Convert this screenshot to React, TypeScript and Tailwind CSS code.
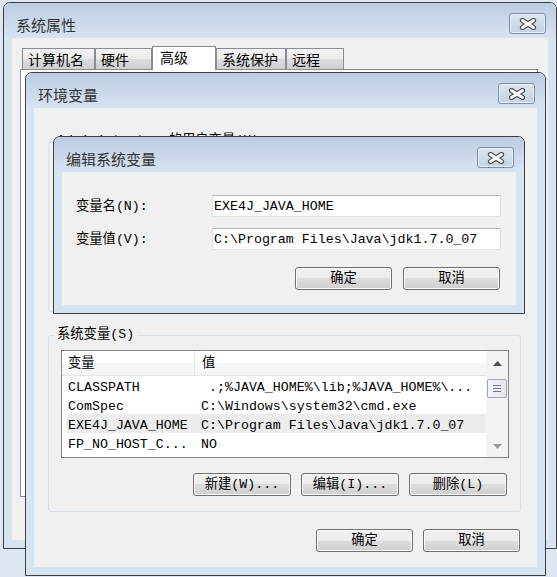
import React from "react";

const F = "font-['Liberation_Mono','Noto_Sans_CJK_SC',monospace] text-[13.3px] text-black";

function CloseBtn() {
  return (
    <div className="w-[37px] h-[21px] rounded-[3px] border border-[#7d8ea6] bg-gradient-to-b from-[#dde6f0] to-[#c3d1e2] shadow-[inset_0_0_0_1px_#e6edf5] flex items-center justify-center">
      <svg width="18" height="12" viewBox="0 0 18 12">
        <path d="M3.5 2.5 L14.5 9.5 M14.5 2.5 L3.5 9.5" stroke="#4a4f57" strokeWidth="5.2" strokeLinecap="round" />
        <path d="M3.5 2.5 L14.5 9.5 M14.5 2.5 L3.5 9.5" stroke="#ffffff" strokeWidth="3" strokeLinecap="round" />
      </svg>
    </div>
  );
}

function Win({ pos, title, children }: { pos: string; title: string; children?: React.ReactNode }) {
  return (
    <div className={`absolute flex flex-col border border-[#3f3f3f] rounded-t-[7px] bg-[#d6e3f1] overflow-hidden ${pos}`}>
      <div className="h-[35px] shrink-0 flex items-start justify-between bg-gradient-to-b from-[#bccde1] via-[#c9d8e9] to-[#d6e3f1]">
        <span className="ml-[12px] mt-[12px] text-[15px] leading-[20px] text-[#333333] font-['Noto_Sans_CJK_SC',sans-serif]">
          {title}
        </span>
        <div className="mt-[10px] mr-[10px]">
          <CloseBtn />
        </div>
      </div>
      <div className="flex-1 min-h-0 mx-[8px] mb-[8px] bg-[#f0f0f0] flex flex-col">{children}</div>
    </div>
  );
}

function Btn({ w, children }: { w: string; children: React.ReactNode }) {
  return (
    <div
      className={`${w} h-[23px] shrink-0 rounded-[3px] border border-[#707070] bg-[linear-gradient(#f2f2f2_0%,#ebebeb_50%,#dddddd_50%,#cfcfcf_100%)] shadow-[inset_0_0_0_1px_#fbfbfb] flex items-center justify-center pt-[1px] leading-[20px] whitespace-nowrap ${F}`}
    >
      {children}
    </div>
  );
}

function Tab({ w, children }: { w: string; children: React.ReactNode }) {
  return (
    <div
      className={`${w} h-[21px] mb-[1px] shrink-0 border border-b-0 border-[#898c95] bg-[linear-gradient(#f3f3f3_0%,#ebebeb_50%,#dddddd_50%,#cfcfcf_100%)] pl-[5px] flex items-center text-[14px] leading-[18px] text-black font-['Noto_Sans_CJK_SC',sans-serif]`}
    >
      {children}
    </div>
  );
}

function Input({ children }: { children: React.ReactNode }) {
  return (
    <div className={`w-[289px] h-[22px] border border-[#dfe3e9] border-t-[#b7bcc4] bg-white pl-[1px] pt-[2px] flex items-center leading-[18px] whitespace-nowrap ${F}`}>
      {children}
    </div>
  );
}

const rows: { n: string; v: string; sel?: boolean }[] = [
  { n: "CLASSPATH", v: " .;%JAVA_HOME%\\lib;%JAVA_HOME%\\..." },
  { n: "ComSpec", v: "C:\\Windows\\system32\\cmd.exe" },
  { n: "EXE4J_JAVA_HOME", v: "C:\\Program Files\\Java\\jdk1.7.0_07", sel: true },
  { n: "FP_NO_HOST_C...", v: "NO" },
];

function ListView() {
  return (
    <div className="ml-[12px] mt-[9px] w-[448px] h-[108px] border border-[#828790] bg-white flex overflow-hidden">
      <div className="flex-1 flex flex-col min-w-0">
        <div className="h-[25px] shrink-0 flex border-b border-[#e5e5e5] bg-[linear-gradient(#ffffff_0%,#ffffff_50%,#f7f8f9_50%,#f3f4f6_100%)]">
          <div className={`w-[133px] border-r border-[#e3e4e6] pl-[6px] pt-[2px] flex items-center leading-[18px] ${F}`}>变量</div>
          <div className={`flex-1 pl-[7px] pt-[2px] flex items-center leading-[18px] ${F}`}>值</div>
        </div>
        {rows.map((r) => (
          <div key={r.n} className={`h-[19px] shrink-0 ml-[5px] flex overflow-hidden ${r.sel ? "bg-[#ececec]" : ""}`}>
            <div className={`w-[128px] pl-[1px] pt-[3px] leading-[17px] whitespace-nowrap overflow-hidden ${F}`}>{r.n}</div>
            <div className={`flex-1 pl-[6px] pt-[3px] leading-[17px] whitespace-pre overflow-hidden ${F}`}>{r.v}</div>
          </div>
        ))}
      </div>
      <div className="w-[22px] shrink-0 flex flex-col bg-[#f3f3f3]">
        <div className="h-[24px] flex items-center justify-center">
          <svg width="9" height="5" viewBox="0 0 9 5">
            <path d="M4.5 0 L9 5 L0 5 Z" fill="#4e4e4e" />
          </svg>
        </div>
        <div className="h-[4px]" />
        <div className="mx-[1px] h-[19px] rounded-[2px] border border-[#9ea7b3] bg-gradient-to-r from-[#f3f4f6] to-[#e4e7ec] flex flex-col items-center justify-center gap-[2px]">
          <div className="w-[8px] h-[1px] bg-[#6f7782]" />
          <div className="w-[8px] h-[1px] bg-[#6f7782]" />
          <div className="w-[8px] h-[1px] bg-[#6f7782]" />
        </div>
        <div className="flex-1" />
        <div className="h-[22px] flex items-center justify-center">
          <svg width="9" height="5" viewBox="0 0 9 5">
            <path d="M0 0 L9 0 L4.5 5 Z" fill="#9a9a9a" />
          </svg>
        </div>
      </div>
    </div>
  );
}

export default function App() {
  return (
    <div className="relative w-[557px] h-[577px] overflow-hidden bg-[#dce7f3]">
      {/* 系统属性 */}
      <Win pos="left-[3px] top-[2px] w-[554px] h-[547px]" title="系统属性">
        <div className="px-[8px] pt-[8px] flex flex-col">
          <div className="relative z-10 -mb-[1px] h-[24px] pl-[2px] flex items-end">
            <Tab w="w-[73px]">计算机名</Tab>
            <Tab w="w-[57px]">硬件</Tab>
            <div className="w-[64px] h-[24px] shrink-0 bg-white border border-b-0 border-[#898c95] pl-[7px] pb-[3px] flex items-center text-[14px] leading-[18px] text-black font-['Noto_Sans_CJK_SC',sans-serif]">
              高级
            </div>
            <Tab w="w-[70px]">系统保护</Tab>
            <Tab w="w-[58px]">远程</Tab>
          </div>
          <div className="w-[518px] h-[428px] border border-[#898c95] bg-white" />
        </div>
      </Win>

      {/* 环境变量 */}
      <Win pos="left-[25px] top-[72px] w-[521px] h-[504px]" title="环境变量">
        <fieldset className="ml-[14px] mt-[26px] w-[473px] h-[178px] border border-[#d5dfe5] rounded-[3px]">
          <legend className={`ml-[5px] px-[3px] leading-[14px] ${F}`}>Administrator 的用户变量(U)</legend>
        </fieldset>
        <fieldset className="ml-[14px] mt-[16px] w-[473px] border border-[#d5dfe5] rounded-[3px] pb-[15px]">
          <legend className={`ml-[5px] px-[3px] leading-[14px] ${F}`}>系统变量(S)</legend>
          <div className="-mt-[1px]">
            <ListView />
          </div>
          <div className="mt-[15px] pr-[13px] flex justify-end gap-[10px]">
            <Btn w="w-[98px]">新建(W)...</Btn>
            <Btn w="w-[98px]">编辑(I)...</Btn>
            <Btn w="w-[98px]">删除(L)</Btn>
          </div>
        </fieldset>
        <div className="mt-[17px] pr-[17px] flex justify-end gap-[10px]">
          <Btn w="w-[97px]">确定</Btn>
          <Btn w="w-[97px]">取消</Btn>
        </div>
      </Win>

      {/* 编辑系统变量 */}
      <Win pos="left-[53px] top-[136px] w-[472px] h-[178px]" title="编辑系统变量">
        <div className="mt-[23px] pl-[14px] flex items-center">
          <span className={`w-[136px] pt-[2px] leading-[20px] ${F}`}>变量名(N):</span>
          <Input>EXE4J_JAVA_HOME</Input>
        </div>
        <div className="mt-[11px] pl-[14px] flex items-center">
          <span className={`w-[136px] pt-[2px] leading-[20px] ${F}`}>变量值(V):</span>
          <Input>{"C:\\Program Files\\Java\\jdk1.7.0_07"}</Input>
        </div>
        <div className="mt-[17px] pr-[16px] flex justify-end gap-[11px]">
          <Btn w="w-[97px]">确定</Btn>
          <Btn w="w-[97px]">取消</Btn>
        </div>
      </Win>
    </div>
  );
}
